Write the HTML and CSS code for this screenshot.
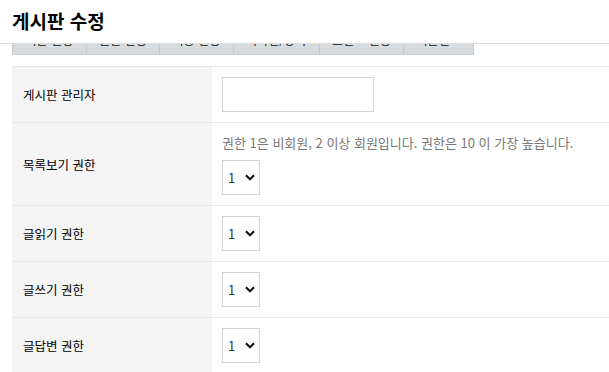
FILE: index.html
```html
<!DOCTYPE html>
<html lang="ko">
<head>
    <meta charset="UTF-8">
    <meta name="viewport" content="width=device-width, initial-scale=1.0">
    <title>게시판 수정</title>
    <link rel="stylesheet" href="styles.css">
</head>
<body>
    <header class="top">
        <h1>게시판 수정</h1>
    </header>

    <div class="container">
        <div class="tabs-clip">
            <ul class="tabs">
                <li><a href="#anc_bo_basic">기본 설정</a></li>
                <li><a href="#anc_bo_auth">권한 설정</a></li>
                <li><a href="#anc_bo_function">기능 설정</a></li>
                <li><a href="#anc_bo_design">디자인/양식</a></li>
                <li><a href="#anc_bo_point">포인트 설정</a></li>
                <li><a href="#anc_bo_extra">여분필드</a></li>
            </ul>
        </div>

        <table class="frm">
            <tbody>
                <tr>
                    <th>게시판 관리자</th>
                    <td><input type="text" name="bo_admin" class="frm-input"></td>
                </tr>
                <tr>
                    <th>목록보기 권한</th>
                    <td>
                        <span class="frm-info">권한 1은 비회원, 2 이상 회원입니다. 권한은 10 이 가장 높습니다.</span>
                        <span class="sel">
                            <select name="bo_list_level">
                                <option>1</option><option>2</option><option>3</option><option>4</option><option>5</option>
                                <option>6</option><option>7</option><option>8</option><option>9</option><option>10</option>
                            </select>
                            <svg class="chev" width="10" height="7" viewBox="0 0 10 7"><path d="M1 1.2 5 5.2 9 1.2" fill="none" stroke="#111" stroke-width="2.2"/></svg>
                        </span>
                    </td>
                </tr>
                <tr>
                    <th>글읽기 권한</th>
                    <td>
                        <span class="sel">
                            <select name="bo_read_level"><option>1</option><option>2</option><option>3</option><option>10</option></select>
                            <svg class="chev" width="10" height="7" viewBox="0 0 10 7"><path d="M1 1.2 5 5.2 9 1.2" fill="none" stroke="#111" stroke-width="2.2"/></svg>
                        </span>
                    </td>
                </tr>
                <tr>
                    <th>글쓰기 권한</th>
                    <td>
                        <span class="sel">
                            <select name="bo_write_level"><option>1</option><option>2</option><option>3</option><option>10</option></select>
                            <svg class="chev" width="10" height="7" viewBox="0 0 10 7"><path d="M1 1.2 5 5.2 9 1.2" fill="none" stroke="#111" stroke-width="2.2"/></svg>
                        </span>
                    </td>
                </tr>
                <tr>
                    <th>글답변 권한</th>
                    <td>
                        <span class="sel">
                            <select name="bo_reply_level"><option>1</option><option>2</option><option>3</option><option>10</option></select>
                            <svg class="chev" width="10" height="7" viewBox="0 0 10 7"><path d="M1 1.2 5 5.2 9 1.2" fill="none" stroke="#111" stroke-width="2.2"/></svg>
                        </span>
                    </td>
                </tr>
            </tbody>
        </table>
    </div>
</body>
</html>
```

FILE: styles.css
```css
body {
    margin: 0;
    font-family: "Noto Sans CJK KR", "Noto Sans", sans-serif;
    font-size: 12px;
    color: #000;
    background: #fff;
    overflow: hidden;
}
.top {
    height: 44px;
    border-bottom: 1px solid #ddd;
    display: flex;
    align-items: center;
    padding: 0 0 2px 12px;
    box-sizing: border-box;
}
.top h1 {
    margin: 0;
    font-size: 19px;
    font-weight: bold;
    line-height: 1;
}
.container {
    padding-left: 12px;
}

.tabs-clip {
    height: 11px;
    overflow: hidden;
    display: flex;
    align-items: flex-end;
    margin-bottom: 11px;
}
.tabs {
    display: flex;
    margin: 0;
    padding: 0;
    list-style: none;
    border-left: 1px solid #c8ccd0;
}
.tabs li {
    background: #d7dbde;
    border-right: 1px solid #c8ccd0;
    border-bottom: 1px solid #c8ccd0;
}
.tabs a {
    display: block;
    padding: 10px 12.5px 5px;
    line-height: 18px;
    color: #111;
    text-decoration: none;
}

.frm {
    width: 100%;
    border-collapse: collapse;
    border-top: 1px solid #e5e5e5;
}
.frm th {
    width: 200px;
    box-sizing: border-box;
    padding: 0 11px;
    background: #f4f4f4;
    border-bottom: 1px solid #e5e5e5;
    text-align: left;
    font-weight: normal;
    font-size: 12.5px;
    color: #000;
}
.frm td {
    padding: 10px;
    border-bottom: 1px solid #e5e5e5;
}
.frm-input {
    display: block;
    width: 152px;
    height: 35px;
    box-sizing: border-box;
    border: 1px solid #d3d3d3;
    padding: 0 5px;
}
.frm-info {
    display: block;
    line-height: 20px;
    margin-bottom: 7px;
    font-size: 13px;
    color: #777;
}
.sel {
    position: relative;
    display: inline-block;
    vertical-align: top;
}
.sel select {
    display: block;
    width: 38px;
    height: 35px;
    box-sizing: border-box;
    border: 1px solid #d3d3d3;
    border-radius: 0;
    background: #fff;
    padding: 0 0 0 5px;
    font-family: "Noto Sans CJK KR", "Noto Sans", sans-serif;
    font-size: 13px;
    color: #333;
    -webkit-appearance: none;
    appearance: none;
}
.chev {
    position: absolute;
    left: 23px;
    top: 14px;
    pointer-events: none;
}
```
